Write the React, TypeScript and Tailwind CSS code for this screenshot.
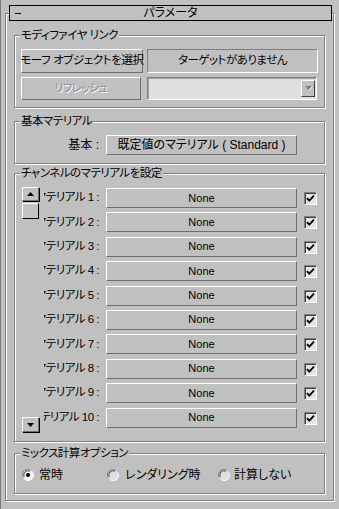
import React from "react";

const raised =
  "border border-t-white border-l-white border-b-[#6e6e6e] border-r-[#6e6e6e]";
const sunken =
  "border border-t-[#808080] border-l-[#808080] border-b-white border-r-white";

function Btn({
  className = "",
  children,
  disabled = false,
}: {
  className?: string;
  children?: React.ReactNode;
  disabled?: boolean;
}) {
  return (
    <div
      className={`flex items-center justify-center whitespace-nowrap ${raised} ${
        disabled ? "text-[#8c8c8c] [text-shadow:1px_1px_0_#fff]" : "text-black"
      } ${className}`}
    >
      {children}
    </div>
  );
}

function Group({
  label,
  className = "",
  children,
}: {
  label: string;
  className?: string;
  children?: React.ReactNode;
}) {
  return (
    <div
      className={`relative shrink-0 border border-[#808080] shadow-[inset_1px_1px_0_#fff,1px_1px_0_#fff] ${className}`}
    >
      <span className="absolute left-[5px] top-[-8px] bg-[#c0c0c0] px-[1px] text-[11.5px] leading-[14px] tracking-[-0.5px] whitespace-nowrap">
        {label}
      </span>
      {children}
    </div>
  );
}

function Tri({ up = false, color = "#000" }: { up?: boolean; color?: string }) {
  return (
    <svg width="7" height="4" viewBox="0 0 7 4">
      {up ? (
        <polygon points="3.5,0 7,4 0,4" fill={color} />
      ) : (
        <polygon points="0,0 7,0 3.5,4" fill={color} />
      )}
    </svg>
  );
}

function Check() {
  return (
    <div className={`flex h-[13px] w-[13px] shrink-0 items-center justify-center bg-[#e4e4e4] ${sunken} shadow-[inset_1px_1px_0_#404040]`}>
      <svg width="9" height="9" viewBox="0 0 9 9">
        <path d="M1 4.2 L3.3 6.6 L8 1.6" stroke="#000" strokeWidth="1.8" fill="none" />
      </svg>
    </div>
  );
}

function Radio({ checked = false }: { checked?: boolean }) {
  return (
    <svg width="12" height="12" viewBox="0 0 12 12" className="shrink-0">
      <circle cx="6" cy="6" r="5.5" fill={checked ? "#f2f2f2" : "#dedede"} />
      <path d="M1.2 8.5 A5.3 5.3 0 0 1 8.5 1.2" stroke="#808080" strokeWidth="1" fill="none" />
      <path d="M2.2 7.8 A4.2 4.2 0 0 1 7.8 2.2" stroke="#404040" strokeWidth="1" fill="none" />
      <path d="M10.8 3.5 A5.3 5.3 0 0 1 3.5 10.8" stroke="#ffffff" strokeWidth="1" fill="none" />
      {checked && <circle cx="6" cy="6" r="2" fill="#000" />}
    </svg>
  );
}

export default function App() {
  const rows = Array.from({ length: 10 }, (_, i) => i + 1);
  return (
    <div className="h-[509px] w-[339px] overflow-hidden border-l border-[#7a7a7a] bg-[#c0c0c0] pl-[4px] pt-[5px] text-[11px] leading-none text-black [font-family:'Liberation_Sans','Noto_Sans_CJK_JP',sans-serif] [font-feature-settings:'palt']">
      {/* title bar */}
      <div className="relative z-10 ml-[4px] flex h-[16px] w-[323px] items-center border border-black bg-[#c0c0c0] text-[12px]">
        <div className="flex w-[20px] items-center pl-[5px]">
          <div className="h-[1px] w-[6px] bg-black" />
        </div>
        <div className="flex-1 text-center">パラメータ</div>
        <div className="w-[20px]" />
      </div>

      {/* rollout frame */}
      <div className="-mt-[8px] h-[488px] w-[329px] border border-[#808080] pl-[8px] pt-[21px] shadow-[inset_1px_1px_0_#fff,1px_1px_0_#fff]">
        {/* Group 1 */}
        <Group label="モディファイヤ リンク" className="h-[73px] w-[311px]">
          <div className="flex flex-col gap-[4px] pl-[6px] pt-[13px]">
            <div className="flex gap-[4px]">
              <Btn className="h-[24px] w-[122px] text-[11.5px] tracking-[-0.4px]">モーフ オブジェクトを選択</Btn>
              <div className={`flex h-[24px] w-[171px] items-center justify-center text-[11.5px] tracking-[-0.5px] ${sunken}`}>
                ターゲットがありません
              </div>
            </div>
            <div className="flex gap-[6px]">
              <Btn disabled className="h-[23px] w-[120px] text-[11px] tracking-[-0.5px]">
                リフレッシュ
              </Btn>
              <div className={`flex h-[23px] w-[170px] items-center justify-end bg-[#e0e0e0] pr-[1px] ${sunken} shadow-[inset_1px_1px_0_#a0a0a0]`}>
                <div className={`flex h-[17px] w-[14px] items-center justify-center bg-[#c0c0c0] border border-t-white border-l-white border-b-[#404040] border-r-[#404040]`}>
                  <svg width="7" height="5" viewBox="0 0 7 5">
                    <polygon points="0,0 7,0 3.5,4" fill="#808080" />
                    <line x1="4" y1="4.5" x2="7" y2="1" stroke="#fff" strokeWidth="1" />
                  </svg>
                </div>
              </div>
            </div>
          </div>
        </Group>

        {/* Group 2 */}
        <Group label="基本マテリアル" className="mt-[13px] h-[43px] w-[311px]">
          <div className="flex items-center pt-[13px] text-[12px]">
            <div className="w-[84px] text-right">基本 :</div>
            <Btn className="ml-[7px] h-[20px] w-[191px]">既定値のマテリアル ( Standard )</Btn>
          </div>
        </Group>

        {/* Group 3 */}
        <Group label="チャンネルのマテリアルを設定" className="mt-[9px] h-[269px] w-[311px]">
          <div className="flex pl-[7px]">
            <div className="mt-[13px] flex h-[245px] w-[17px] flex-col">
              <div className={`flex h-[14px] w-[17px] items-center justify-center ${raised} shadow-[1px_1px_0_#000]`}>
                <Tri up />
              </div>
              <div className="mt-[2px] h-[16px] w-[17px] border border-t-white border-l-white border-b-black border-r-black bg-[#c4c4c4]" />
              <div className="flex-1" />
              <div className={`flex h-[15px] w-[17px] items-center justify-center ${raised} shadow-[1px_1px_0_#000]`}>
                <Tri />
              </div>
            </div>
            <div className="ml-[5px] mt-[14px] flex flex-col">
              {rows.map((n) => (
                <div key={n} className="flex h-[24.4px] items-start">
                  <div className="flex h-[20px] w-[55px] items-center justify-end overflow-hidden whitespace-nowrap text-[11.5px] tracking-[-0.5px]">
                    マテリアル {n} :
                  </div>
                  <Btn className="ml-[7px] h-[20px] w-[191px]">None</Btn>
                  <div className="ml-[7px] mt-[4px]">
                    <Check />
                  </div>
                </div>
              ))}
            </div>
          </div>
        </Group>

        {/* Group 4 */}
        <Group label="ミックス計算オプション" className="mt-[11px] h-[41px] w-[311px]">
          <div className="flex items-center pl-[7px] pt-[15px] text-[12px]">
            <div className="flex w-[85px] items-center gap-[5px]">
              <Radio checked />
              <span>常時</span>
            </div>
            <div className="flex w-[111px] items-center gap-[6px]">
              <Radio />
              <span>レンダリング時</span>
            </div>
            <div className="flex items-center gap-[4px]">
              <Radio />
              <span>計算しない</span>
            </div>
          </div>
        </Group>
      </div>
    </div>
  );
}
